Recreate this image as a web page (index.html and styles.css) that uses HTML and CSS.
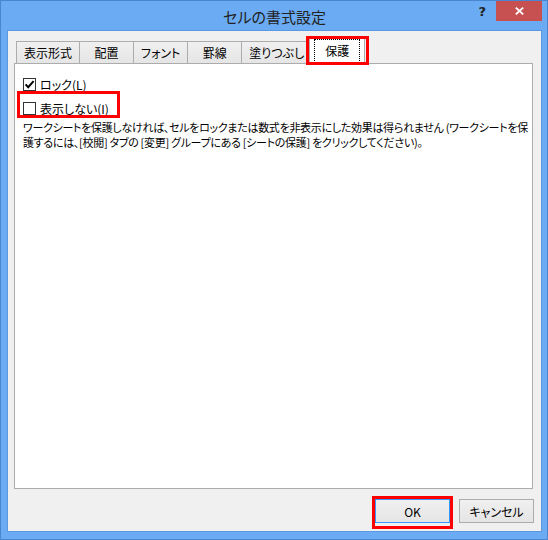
FILE: index.html
```html
<!DOCTYPE html>
<html lang="ja">
<head>
    <meta charset="UTF-8">
    <meta name="viewport" content="width=device-width, initial-scale=1.0">
    <title>セルの書式設定</title>
    <link rel="stylesheet" href="styles.css">
</head>
<body>
    <div class="window">
        <div class="titlebar">
            <div></div>
            <div class="title">セルの書式設定</div>
            <div class="controls">
                <span class="help">?</span>
                <span class="close">
                    <svg width="9" height="8" viewBox="0 0 9 8">
                        <path d="M0.8 0.6 L8.2 7.4 M8.2 0.6 L0.8 7.4" stroke="#fff" stroke-width="1.8" fill="none"/>
                    </svg>
                </span>
            </div>
        </div>

        <div class="client">
            <div class="tabs">
                <div class="tab">表示形式</div>
                <div class="tab">配置</div>
                <div class="tab">フォント</div>
                <div class="tab">罫線</div>
                <div class="tab">塗りつぶし</div>
                <div class="tab active mark"><span class="focus">保護</span></div>
            </div>

            <div class="panel">
                <label class="check">
                    <span class="box">
                        <svg width="11" height="11" viewBox="0 0 11 11">
                            <path d="M1.6 5.4 L4.2 8.2 L9.6 2.2" stroke="#000" stroke-width="2" fill="none"/>
                        </svg>
                    </span>
                    ロック(<u>L</u>)
                </label>
                <label class="check mark">
                    <span class="box"></span>
                    表示しない(<u>I</u>)
                </label>
                <p class="note">ワークシートを保護しなければ、セルをロックまたは数式を非表示にした効果は得られません (ワークシートを保<br>護するには、[校閲] タブの [変更] グループにある [シートの保護] をクリックしてください)。</p>
            </div>

            <div class="buttons">
                <button class="btn default mark">OK</button>
                <button class="btn">キャンセル</button>
            </div>
        </div>
    </div>
</body>
</html>
```

FILE: styles.css
```css
*, *::before, *::after {
    box-sizing: border-box;
}

body {
    margin: 0;
    font-family: "Noto Sans CJK JP", sans-serif;
    font-size: 12px;
    font-feature-settings: "palt";
    color: #000;
}

.window {
    width: 548px;
    height: 540px;
    background: #6aabf3;
    border: 1px solid #4a86d0;
    padding: 0 5px 7px 6px;
    display: flex;
    flex-direction: column;
}

.titlebar {
    height: 29px;
    display: grid;
    grid-template-columns: 1fr auto 1fr;
    align-items: start;
}

.title {
    font-size: 15px;
    line-height: 28px;
    padding-top: 2px;
    color: #222;
}

.controls {
    justify-self: end;
    display: flex;
    align-items: flex-start;
}

.help {
    font-family: "DejaVu Sans", sans-serif;
    font-weight: bold;
    font-size: 13px;
    line-height: 20px;
    color: #222;
    margin-right: 10px;
    margin-top: 1px;
}

.close {
    width: 46px;
    height: 20px;
    background: #c75050;
    display: flex;
    align-items: center;
    justify-content: center;
}

.client {
    flex: 1;
    background: #f0f0f0;
    border: 1px solid #5a98e2;
    display: flex;
    flex-direction: column;
}

/* tab strip */
.tabs {
    display: flex;
    align-items: flex-end;
    height: 33px;
    padding: 7px 0 0 8px;
}

.tab {
    height: 23px;
    min-width: 55px;
    padding: 0 7px;
    border: 1px solid #acacac;
    border-bottom: none;
    background: linear-gradient(#f0f0f0, #e5e5e5);
    display: flex;
    align-items: center;
    justify-content: center;
    line-height: 1;
}

.tab + .tab {
    margin-left: -1px;
}

.tab.active {
    height: 26px;
    min-width: 56px;
    margin: 0 -2px 0 -3px;
    padding: 0 4px 1px;
    background: #fff;
    align-items: stretch;
    position: relative;
    z-index: 1;
}

.focus {
    flex: 1;
    display: flex;
    align-items: center;
    justify-content: center;
    border: 1px dotted #000;
}

.panel {
    flex: 1;
    margin: -1px 8px 0 6px;
    background: #fff;
    border: 1px solid #acacac;
    padding: 9px 8px;
}

.check {
    display: flex;
    align-items: center;
    width: fit-content;
    height: 22px;
}

.check + .check {
    margin-top: 2px;
}

.box {
    width: 13px;
    height: 13px;
    border: 1px solid #333;
    background: #fff;
    margin-right: 4px;
    display: flex;
    align-items: center;
    justify-content: center;
}

.note {
    margin: 1px 0 0;
    font-size: 11px;
    line-height: 15px;
    letter-spacing: -0.3px;
    white-space: nowrap;
}

.buttons {
    display: flex;
    justify-content: flex-end;
    gap: 9px;
    padding: 10px 7px 8px 0;
}

.btn {
    width: 75px;
    height: 24px;
    padding: 0;
    font: inherit;
    color: #000;
    border: 1px solid #acacac;
    background: linear-gradient(#f0f0f0, #e5e5e5);
}

.btn.default {
    border-color: #3399ff;
}

/* red annotation boxes */
.mark {
    position: relative;
}

.mark::after {
    content: "";
    position: absolute;
    border: 3px solid #f00;
    pointer-events: none;
}

.tab.mark::after {
    left: -4px;
    top: -3px;
    width: 63px;
    height: 29px;
}

.check.mark::after {
    left: -6px;
    top: -6px;
    width: 103px;
    height: 27px;
}

.btn.mark::after {
    left: -4px;
    top: -4px;
    width: 81px;
    height: 33px;
}
```
